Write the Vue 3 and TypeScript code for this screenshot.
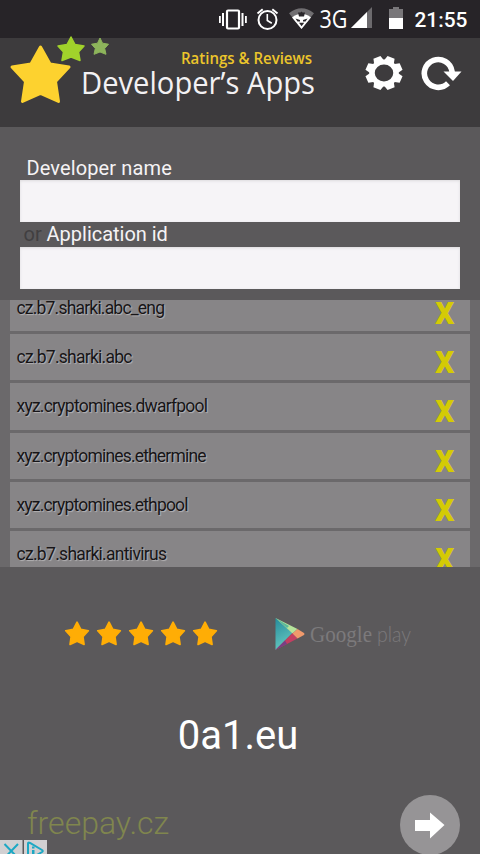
<script setup lang="ts">
import { ref } from 'vue'

const star = 'M12 2.2 L15.3 8.5 L22 9.6 L17.2 14.6 L18.2 21.4 L12 18.6 L5.8 21.4 L6.8 14.6 L2 9.6 L8.7 8.5 Z'

const apps = ref([
  { id: 'cz.b7.sharki.abc_eng', width: 148.5 },
  { id: 'cz.b7.sharki.abc', width: 116 },
  { id: 'xyz.cryptomines.dwarfpool', width: 191.5 },
  { id: 'xyz.cryptomines.ethermine', width: 190 },
  { id: 'xyz.cryptomines.ethpool', width: 172 },
  { id: 'cz.b7.sharki.antivirus', width: 150.5 },
])
const developer = ref('')
const applicationId = ref('')

function removeApp(index: number) {
  apps.value.splice(index, 1)
}
</script>

<template>
  <main class="screen">
    <div class="status">
      <svg width="480" height="38" viewBox="0 0 480 38">
        <g fill="#fff">
          <rect x="227" y="10.500" width="12" height="18" rx="1" fill="none" stroke="#fff" stroke-width="2.200" />
          <path d="M222 13h2v13h-2zM219 16h1.800v7H219zM241.500 13h2v13h-2zM245 16h1.800v7H245z" />
        </g>
        <g fill="none" stroke="#fff" stroke-width="2">
          <circle cx="267.500" cy="20" r="9" />
          <path d="M267.300 14v6.500l4.500 2.800" stroke-width="1.600" />
          <path d="M257.500 13.500l5.200-4.200M277.500 13.500l-5.200-4.200" />
        </g>
        <path d="M289 13.200Q301.500 3.500 314 13.200L301.500 29Z" fill="#706e71" />
        <path d="M292 17.500Q301.500 10 311 17.500L301.500 29Z" fill="#fff" />
        <path d="M298 12.500h2.500l1-1 1 1h2.500l-1 4h-5zM295.500 18.500l4.500 1.500v1.500h-2.500zM307.500 18.500l-4.500 1.500v1.500h2.500zM299 22.800h5.200l-2.600 3.400z" fill="#29262a" />
        <text x="319.500" y="28" font-size="25" textLength="28" lengthAdjust="spacingAndGlyphs" fill="#fff" class="signal">3G</text>
        <path d="M372 7v21h-21z" fill="#6c6a6d" />
        <path d="M367 12v16h-16z" fill="#fff" />
        <path d="M389 9h4V7h6v2h4v9h-14z" fill="#79777a" />
        <path d="M389 18h14v11h-14z" fill="#fff" />
        <text x="414.500" y="27" font-size="20" textLength="53" lengthAdjust="spacingAndGlyphs" fill="#fff" class="clock">21:55</text>
      </svg>
    </div>

    <header class="header">
      <svg width="330" height="89" viewBox="0 0 330 89">
        <path d="M40.500 9L50 26L69 29L55.500 43.500L58.500 63.500L40.500 55.500L22.500 63.500L25.500 43.500L12 29L31 26Z" fill="#fdd22f" stroke="#fdd22f" stroke-width="3" stroke-linejoin="round" />
        <path d="M71-1L75 6.500L84 8L78.500 14L80 22.500L71 19L62 22.500L63.500 14L58 8L67 6.500Z" fill="#a1d22b" stroke="#a1d22b" stroke-width="1.500" stroke-linejoin="round" />
        <path d="M100 0L102.500 5.200L108.500 6.200L104.700 10.500L106 16.300L100 14L94 16.300L95.300 10.500L91.500 6.200L97.500 5.200Z" fill="#8db45b" stroke="#8db45b" stroke-linejoin="round" />
        <text x="181" y="25.500" font-size="16" textLength="131" lengthAdjust="spacingAndGlyphs" class="tagline">Ratings &amp; Reviews</text>
        <text x="81" y="56" font-size="31" textLength="234" lengthAdjust="spacingAndGlyphs" class="brand">Developer’s Apps</text>
      </svg>
      <div class="actions">
        <button aria-label="Settings">
          <svg width="38" height="36" viewBox="-19 -18 38 36">
            <g fill="#fff" transform="scale(1 .91)">
              <circle r="12" fill="none" stroke="#fff" stroke-width="5.500" />
              <path v-for="n in 8" :key="n" d="M-5.500-12L-3.800-18.500H3.800L5.500-12Z" :transform="`rotate(${n * 45 + 22.5})`" />
            </g>
          </svg>
        </button>
        <button aria-label="Refresh">
          <svg width="42" height="36" viewBox="0 0 42 36">
            <path d="M28 28.300A13.900 13.900 0 1 1 32 16.500L32.200 18" fill="none" stroke="#fff" stroke-width="5.600" />
            <path d="M23.500 16.500H41.500L33 26Z" fill="#fff" />
          </svg>
        </button>
      </div>
    </header>

    <form class="form" @submit.prevent>
      <label class="name" for="developer">Developer name</label>
      <input id="developer" v-model="developer" type="text" />
      <label class="app" for="application"><span>or</span> Application id</label>
      <input id="application" v-model="applicationId" type="text" />
    </form>

    <section class="list">
      <ul>
        <li v-for="(app, i) in apps" :key="app.id">
          <svg class="package" width="220" height="46" viewBox="0 0 220 46">
            <text x="6.500" y="29" font-size="17.500" :textLength="app.width" lengthAdjust="spacing">{{ app.id }}</text>
          </svg>
          <button aria-label="Remove" @click="removeApp(i)">
            <svg width="20" height="46" viewBox="0 0 20 46">
              <text x="0" y="38.500" font-size="30" textLength="19.500" lengthAdjust="spacingAndGlyphs" class="remove">X</text>
            </svg>
          </button>
        </li>
      </ul>
    </section>

    <section class="store">
      <div class="stars">
        <svg v-for="n in 5" :key="n" width="32.100" height="30" viewBox="0 0 32.100 30">
          <path :d="star" transform="translate(2.500 .6) scale(1.13 1.16)" fill="#ffad05" stroke="#ffad05" stroke-width="1.500" stroke-linejoin="round" />
        </svg>
      </div>
      <svg class="play" width="140" height="40" viewBox="0 0 140 40">
        <defs>
          <linearGradient id="teal" x1="0" y1="0" x2="0.300" y2="1">
            <stop offset="0" stop-color="#258b9b" />
            <stop offset="1" stop-color="#63c6bf" />
          </linearGradient>
        </defs>
        <path d="M0.500 4V36L17.500 19Z" fill="url(#teal)" />
        <path d="M0.500 4L22.500 15L17.500 19.500Z" fill="#b6e49b" />
        <path d="M0.500 4L12 14L14 12Z" fill="#5bb99b" />
        <path d="M0.500 36L17.500 19L22.500 24.500Z" fill="#c33f62" />
        <path d="M0.500 36L10 26.500L12 30Z" fill="#793e83" />
        <path d="M22.500 15L29 19Q30 20 29 21L22.500 24.500L17.500 19.500Z" fill="#f19a6c" />
        <text x="35" y="27.500" font-size="23.500" textLength="62" lengthAdjust="spacingAndGlyphs" class="google">Google</text>
        <text x="102" y="27.500" font-size="21" textLength="34" lengthAdjust="spacingAndGlyphs" class="google-play">play</text>
      </svg>
    </section>

    <h1 class="domain">0a1.eu</h1>

    <footer class="footer">
      <span class="freepay">freepay.cz</span>
      <button class="next" aria-label="Next">
        <svg width="60" height="60" viewBox="0 0 60 60"><path d="M15 25H30V17.500L44.500 30L30 43.500V36H15Z" fill="#fff" /></svg>
      </button>
    </footer>

    <div class="ad">
      <svg width="47" height="14" viewBox="0 0 47 14">
        <path d="M0 0h22.500v14H0zM24 0h23v14H24z" fill="#d1d0d2" />
        <path d="M4.500 4L18 18M18 4L4.500 18" stroke="#1ca8c4" stroke-width="2" />
        <path d="M28 19V3.500Q28 2 30 3L42 10Q43.500 11 42 12L30 19" fill="none" stroke="#1ca8c4" stroke-width="2" />
        <path d="M32 6.500h2.500v2H32zM32 10h2.500v4H32z" fill="#1ca8c4" />
      </svg>
    </div>
  </main>
</template>

<style>
body { margin: 0; background: #5b595b; }
</style>

<style scoped>
.screen {
  position: relative;
  display: flex;
  flex-direction: column;
  width: 480px;
  height: 854px;
  overflow: hidden;
  background: #5b595b;
  font-family: Roboto, "Liberation Sans", sans-serif;
}
svg { display: block; flex: none; }
button { margin: 0; padding: 0; border: 0; background: none; }
.status { height: 38px; flex: none; background: #272428; }
.signal { font-family: "Open Sans", sans-serif; }
.clock { font-family: Roboto, sans-serif; font-weight: 500; }
.header {
  display: flex;
  justify-content: space-between;
  height: 89px;
  flex: none;
  background: #3d3b3d;
}
.header > svg { overflow: visible; }
.tagline { fill: #ecc52b; font-family: "Open Sans", sans-serif; font-weight: 600; }
.brand { fill: #f3f1f3; font-family: "Open Sans", sans-serif; font-weight: 400; }
.actions { display: flex; gap: 17px; padding: 17px 18px 0 0; align-items: flex-start; }
.form { display: flex; flex-direction: column; height: 173px; flex: none; padding: 0 20px; box-sizing: border-box; }
label { color: #f5f3f5; font-size: 20px; white-space: nowrap; }
.name { height: 24px; line-height: 24px; margin-top: 29px; padding-left: 6.500px; letter-spacing: 0.120px; }
.app { height: 25px; line-height: 25px; padding-left: 3.500px; letter-spacing: -0.020px; }
.app span { color: #413f41; }
input {
  width: 440px;
  height: 42px;
  box-sizing: border-box;
  border: 0;
  border-radius: 0;
  background: #f6f4f7;
  outline: none;
  box-shadow: inset 0 1px 3px #dcdadd;
}
.list { height: 267px; flex: none; overflow: hidden; background: #6b696b; }
ul { display: flex; flex-direction: column; gap: 3px; margin: -15.300px 10px 0; padding: 0; list-style: none; }
li {
  display: flex;
  justify-content: space-between;
  height: 46.300px;
  flex: none;
  padding-right: 15px;
  background: #878587;
}
.package { fill: #171517; text-shadow: 1px 1px 1px #b5b3b5; }
.remove { fill: #d4ca05; font-family: "Open Sans", sans-serif; font-weight: 800; }
.store { display: flex; align-items: center; height: 60px; flex: none; margin-top: 37px; padding-left: 61px; }
.stars { display: flex; width: 213.500px; flex: none; }
.google { fill: #7c7a7c; font-family: "Liberation Serif", serif; }
.google-play { fill: #7c7a7c; font-family: Lato, sans-serif; font-weight: 300; }
.domain { margin: 47px 0 0; padding-right: 4px; color: #fff; font-size: 40px; font-weight: 400; line-height: 50px; text-align: center; }
.footer { display: flex; justify-content: space-between; height: 60px; margin-top: 34px; padding: 0 20px 0 27px; flex: none; }
.freepay { color: #80864e; font-size: 32px; font-weight: 300; line-height: 57px; }
.next { width: 60px; height: 60px; border-radius: 50%; background: #969496; }
.ad { position: absolute; left: 0; bottom: 0; }
</style>
